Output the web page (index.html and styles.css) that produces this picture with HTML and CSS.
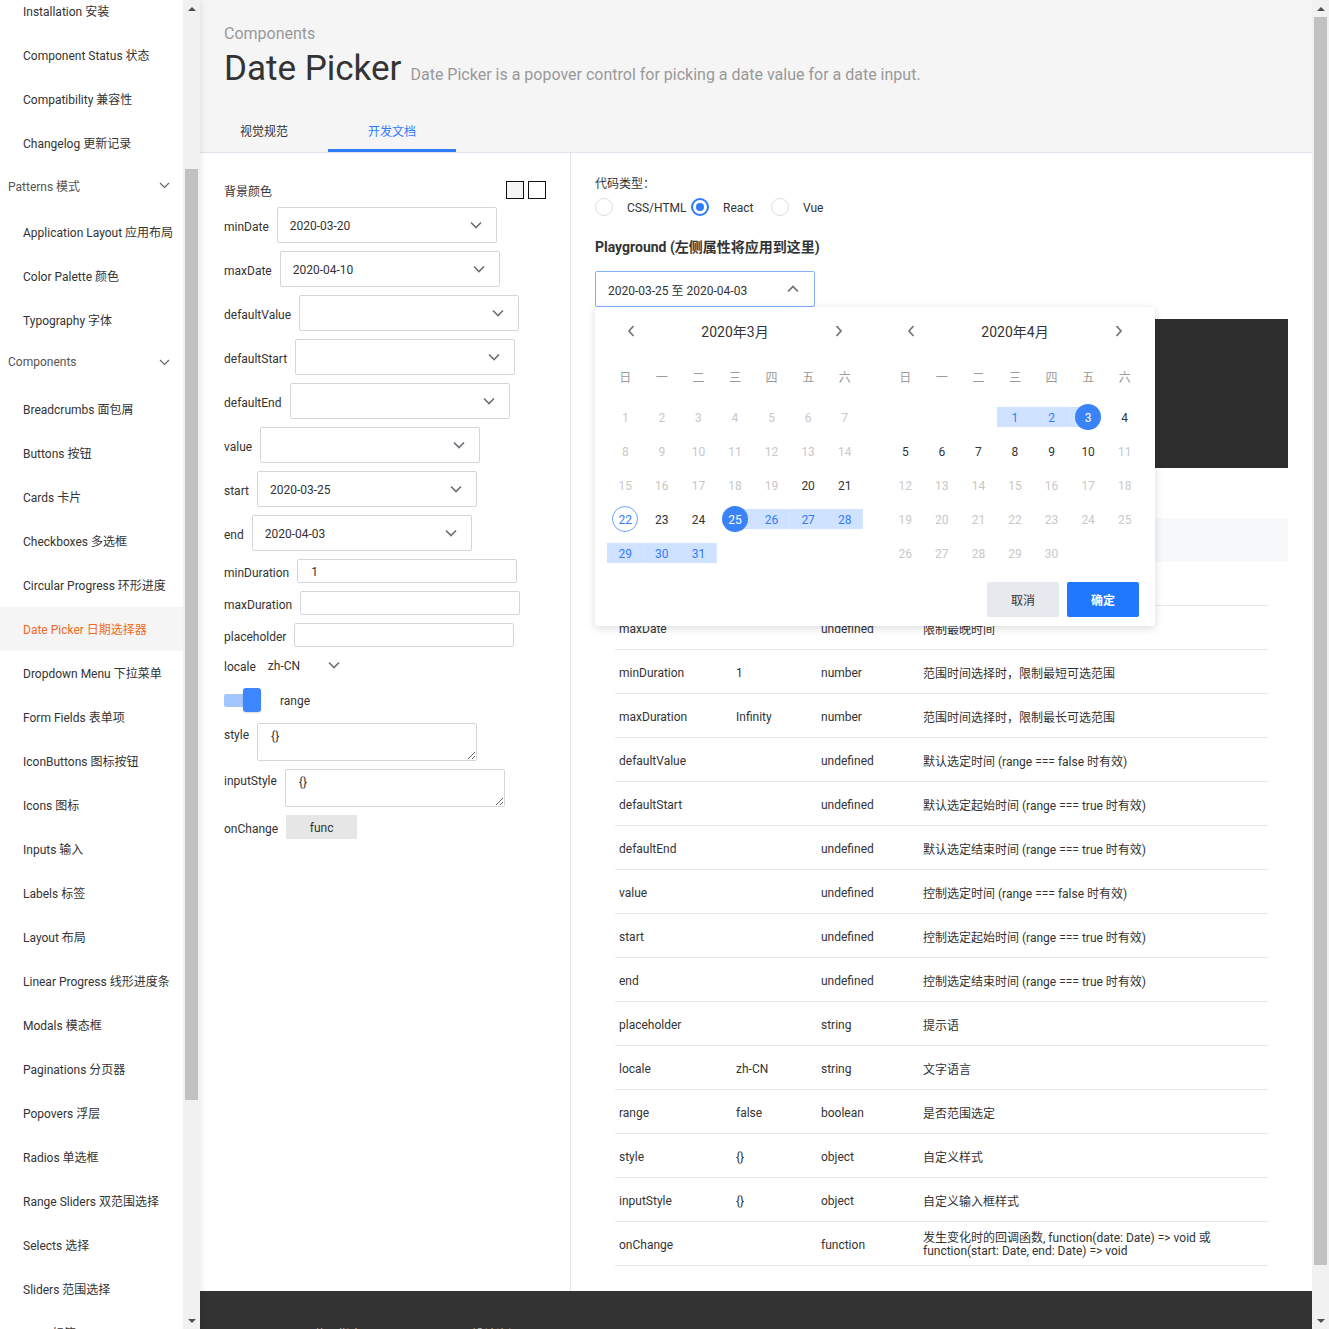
FILE: index.html
```html
<!DOCTYPE html>
<html lang="zh-CN">
<head>
<meta charset="utf-8">
<title>Date Picker</title>
<link rel="stylesheet" href="styles.css">
</head>
<body>
<div class="app">
  <aside class="sidebar">
    <nav class="nav">
      <div class="nav-sub nav-first">
        <div class="nav-item">Installation 安装</div>
        <div class="nav-item">Component Status 状态</div>
        <div class="nav-item">Compatibility 兼容性</div>
        <div class="nav-item">Changelog 更新记录</div>
      </div>
      <div class="nav-group"><span>Patterns 模式</span><svg class="g-chev" width="11" height="7" viewBox="0 0 11 7"><path d="M1 1l4.5 4.5L10 1" fill="none" stroke="#666" stroke-width="1.2"/></svg></div>
      <div class="nav-sub">
        <div class="nav-item">Application Layout 应用布局</div>
        <div class="nav-item">Color Palette 颜色</div>
        <div class="nav-item">Typography 字体</div>
      </div>
      <div class="nav-group"><span>Components</span><svg class="g-chev" width="11" height="7" viewBox="0 0 11 7"><path d="M1 1l4.5 4.5L10 1" fill="none" stroke="#666" stroke-width="1.2"/></svg></div>
      <div class="nav-sub">
        <div class="nav-item">Breadcrumbs 面包屑</div>
        <div class="nav-item">Buttons 按钮</div>
        <div class="nav-item">Cards 卡片</div>
        <div class="nav-item">Checkboxes 多选框</div>
        <div class="nav-item">Circular Progress 环形进度</div>
        <div class="nav-item active">Date Picker 日期选择器</div>
        <div class="nav-item">Dropdown Menu 下拉菜单</div>
        <div class="nav-item">Form Fields 表单项</div>
        <div class="nav-item">IconButtons 图标按钮</div>
        <div class="nav-item">Icons 图标</div>
        <div class="nav-item">Inputs 输入</div>
        <div class="nav-item">Labels 标签</div>
        <div class="nav-item">Layout 布局</div>
        <div class="nav-item">Linear Progress 线形进度条</div>
        <div class="nav-item">Modals 模态框</div>
        <div class="nav-item">Paginations 分页器</div>
        <div class="nav-item">Popovers 浮层</div>
        <div class="nav-item">Radios 单选框</div>
        <div class="nav-item">Range Sliders 双范围选择</div>
        <div class="nav-item">Selects 选择</div>
        <div class="nav-item">Sliders 范围选择</div>
        <div class="nav-item">Tags 标签</div>
      </div>
    </nav>
    <div class="vscroll side-scroll">
      <div class="sb-arrow"><span class="tri-up"></span></div>
      <div class="sb-track"><div class="sb-thumb"></div></div>
      <div class="sb-arrow"><span class="tri-down"></span></div>
    </div>
  </aside>

  <main class="main">
    <header class="page-head">
      <div class="crumb">Components</div>
      <div class="title-row">
        <h1 class="title">Date Picker</h1>
        <span class="subtitle">Date Picker is a popover control for picking a date value for a date input.</span>
      </div>
      <div class="tabs">
        <div class="tab">视觉规范</div>
        <div class="tab tab-active">开发文档</div>
      </div>
    </header>

    <div class="content">
      <section class="props">
        <div class="bg-row">
          <span>背景颜色</span>
          <div class="swatches"><span class="sw sw-grey"></span><span class="sw"></span></div>
        </div>
        <div class="field"><label>minDate</label><div class="select"><span>2020-03-20</span><svg width="12" height="8" viewBox="0 0 12 8"><path d="M1 1.5l5 5 5-5" fill="none" stroke="#6b6f76" stroke-width="1.6"/></svg></div></div>
        <div class="field"><label>maxDate</label><div class="select"><span>2020-04-10</span><svg width="12" height="8" viewBox="0 0 12 8"><path d="M1 1.5l5 5 5-5" fill="none" stroke="#6b6f76" stroke-width="1.6"/></svg></div></div>
        <div class="field"><label>defaultValue</label><div class="select"><span></span><svg width="12" height="8" viewBox="0 0 12 8"><path d="M1 1.5l5 5 5-5" fill="none" stroke="#6b6f76" stroke-width="1.6"/></svg></div></div>
        <div class="field"><label>defaultStart</label><div class="select"><span></span><svg width="12" height="8" viewBox="0 0 12 8"><path d="M1 1.5l5 5 5-5" fill="none" stroke="#6b6f76" stroke-width="1.6"/></svg></div></div>
        <div class="field"><label>defaultEnd</label><div class="select"><span></span><svg width="12" height="8" viewBox="0 0 12 8"><path d="M1 1.5l5 5 5-5" fill="none" stroke="#6b6f76" stroke-width="1.6"/></svg></div></div>
        <div class="field"><label>value</label><div class="select"><span></span><svg width="12" height="8" viewBox="0 0 12 8"><path d="M1 1.5l5 5 5-5" fill="none" stroke="#6b6f76" stroke-width="1.6"/></svg></div></div>
        <div class="field"><label>start</label><div class="select"><span>2020-03-25</span><svg width="12" height="8" viewBox="0 0 12 8"><path d="M1 1.5l5 5 5-5" fill="none" stroke="#6b6f76" stroke-width="1.6"/></svg></div></div>
        <div class="field"><label>end</label><div class="select"><span>2020-04-03</span><svg width="12" height="8" viewBox="0 0 12 8"><path d="M1 1.5l5 5 5-5" fill="none" stroke="#6b6f76" stroke-width="1.6"/></svg></div></div>
        <div class="field field-sm"><label>minDuration</label><div class="input">1</div></div>
        <div class="field field-sm"><label>maxDuration</label><div class="input"></div></div>
        <div class="field field-sm"><label>placeholder</label><div class="input"></div></div>
        <div class="field locale-row"><label>locale</label><div class="plain-select"><span>zh-CN</span><svg width="12" height="8" viewBox="0 0 12 8"><path d="M1 1.5l5 5 5-5" fill="none" stroke="#6b6f76" stroke-width="1.6"/></svg></div></div>
        <div class="toggle-row">
          <div class="toggle"><span class="toggle-track"></span><span class="toggle-knob"></span></div>
          <span class="toggle-label">range</span>
        </div>
        <div class="field field-top"><label>style</label><textarea class="ta" readonly>{}</textarea></div>
        <div class="field field-top"><label>inputStyle</label><textarea class="ta" readonly>{}</textarea></div>
        <div class="field"><label>onChange</label><button class="func-btn">func</button></div>
      </section>

      <section class="demo">
        <div class="code-type">代码类型：</div>
        <div class="radios">
          <div class="radio-item r1"><span class="radio"></span><span class="r-label">CSS/HTML</span></div>
          <div class="radio-item r2"><span class="radio radio-on"><i></i></span><span class="r-label">React</span></div>
          <div class="radio-item r3"><span class="radio"></span><span class="r-label">Vue</span></div>
        </div>
        <h3 class="pg-title">Playground (左侧属性将应用到这里)</h3>

        <div class="date-wrap">
          <div class="date-input">
            <span>2020-03-25 至 2020-04-03</span>
            <svg width="12" height="8" viewBox="0 0 12 8"><path d="M1 6.5l5-5 5 5" fill="none" stroke="#6b6f76" stroke-width="1.6"/></svg>
          </div>

          <div class="popover">
            <div class="months">
              <div class="month">
                <div class="m-head">
                  <svg width="8" height="12" viewBox="0 0 8 12"><path d="M6.5 1L2 6l4.5 5" fill="none" stroke="#777" stroke-width="1.8"/></svg>
                  <span class="m-title">2020年3月</span>
                  <svg width="8" height="12" viewBox="0 0 8 12"><path d="M1.5 1L6 6l-4.5 5" fill="none" stroke="#777" stroke-width="1.8"/></svg>
                </div>
                <div class="weekdays"><span>日</span><span>一</span><span>二</span><span>三</span><span>四</span><span>五</span><span>六</span></div>
                <div class="days">
                  <span class="d dis">1</span><span class="d dis">2</span><span class="d dis">3</span><span class="d dis">4</span><span class="d dis">5</span><span class="d dis">6</span><span class="d dis">7</span>
                  <span class="d dis">8</span><span class="d dis">9</span><span class="d dis">10</span><span class="d dis">11</span><span class="d dis">12</span><span class="d dis">13</span><span class="d dis">14</span>
                  <span class="d dis">15</span><span class="d dis">16</span><span class="d dis">17</span><span class="d dis">18</span><span class="d dis">19</span><span class="d">20</span><span class="d">21</span>
                  <span class="d today"><i>22</i></span><span class="d">23</span><span class="d">24</span><span class="d start"><i>25</i></span><span class="d in">26</span><span class="d in">27</span><span class="d in">28</span>
                  <span class="d in">29</span><span class="d in">30</span><span class="d in">31</span><span class="d"></span><span class="d"></span><span class="d"></span><span class="d"></span>
                </div>
              </div>
              <div class="month">
                <div class="m-head">
                  <svg width="8" height="12" viewBox="0 0 8 12"><path d="M6.5 1L2 6l4.5 5" fill="none" stroke="#777" stroke-width="1.8"/></svg>
                  <span class="m-title">2020年4月</span>
                  <svg width="8" height="12" viewBox="0 0 8 12"><path d="M1.5 1L6 6l-4.5 5" fill="none" stroke="#777" stroke-width="1.8"/></svg>
                </div>
                <div class="weekdays"><span>日</span><span>一</span><span>二</span><span>三</span><span>四</span><span>五</span><span>六</span></div>
                <div class="days">
                  <span class="d"></span><span class="d"></span><span class="d"></span><span class="d in">1</span><span class="d in">2</span><span class="d end"><i>3</i></span><span class="d">4</span>
                  <span class="d">5</span><span class="d">6</span><span class="d">7</span><span class="d">8</span><span class="d">9</span><span class="d">10</span><span class="d dis">11</span>
                  <span class="d dis">12</span><span class="d dis">13</span><span class="d dis">14</span><span class="d dis">15</span><span class="d dis">16</span><span class="d dis">17</span><span class="d dis">18</span>
                  <span class="d dis">19</span><span class="d dis">20</span><span class="d dis">21</span><span class="d dis">22</span><span class="d dis">23</span><span class="d dis">24</span><span class="d dis">25</span>
                  <span class="d dis">26</span><span class="d dis">27</span><span class="d dis">28</span><span class="d dis">29</span><span class="d dis">30</span><span class="d"></span><span class="d"></span>
                </div>
              </div>
            </div>
            <div class="pop-actions">
              <button class="btn btn-cancel">取消</button>
              <button class="btn btn-ok">确定</button>
            </div>
          </div>
        </div>

        <div class="code-block"></div>

        <div class="api">
          <div class="api-head"><div class="row-grid"><span>属性</span><span>默认值</span><span>类型</span><span>说明</span></div></div>
          <div class="rows">
            <div class="row"><span>minDate</span><span></span><span>undefined</span><span>限制最早时间</span></div>
            <div class="row"><span>maxDate</span><span></span><span>undefined</span><span>限制最晚时间</span></div>
            <div class="row"><span>minDuration</span><span>1</span><span>number</span><span>范围时间选择时，限制最短可选范围</span></div>
            <div class="row"><span>maxDuration</span><span>Infinity</span><span>number</span><span>范围时间选择时，限制最长可选范围</span></div>
            <div class="row"><span>defaultValue</span><span></span><span>undefined</span><span>默认选定时间 (range === false 时有效)</span></div>
            <div class="row"><span>defaultStart</span><span></span><span>undefined</span><span>默认选定起始时间 (range === true 时有效)</span></div>
            <div class="row"><span>defaultEnd</span><span></span><span>undefined</span><span>默认选定结束时间 (range === true 时有效)</span></div>
            <div class="row"><span>value</span><span></span><span>undefined</span><span>控制选定时间 (range === false 时有效)</span></div>
            <div class="row"><span>start</span><span></span><span>undefined</span><span>控制选定起始时间 (range === true 时有效)</span></div>
            <div class="row"><span>end</span><span></span><span>undefined</span><span>控制选定结束时间 (range === true 时有效)</span></div>
            <div class="row"><span>placeholder</span><span></span><span>string</span><span>提示语</span></div>
            <div class="row"><span>locale</span><span>zh-CN</span><span>string</span><span>文字语言</span></div>
            <div class="row"><span>range</span><span>false</span><span>boolean</span><span>是否范围选定</span></div>
            <div class="row"><span>style</span><span>{}</span><span>object</span><span>自定义样式</span></div>
            <div class="row"><span>inputStyle</span><span>{}</span><span>object</span><span>自定义输入框样式</span></div>
            <div class="row"><span>onChange</span><span></span><span>function</span><span class="two-line">发生变化时的回调函数, function(date: Date) =&gt; void 或<br>function(start: Date, end: Date) =&gt; void</span></div>
          </div>
        </div>
      </section>
    </div>

    <footer class="footer">
      <span>使用指南</span>
      <span>设计资源</span>
    </footer>
  </main>

  <div class="vscroll page-scroll">
    <div class="sb-arrow"><span class="tri-up"></span></div>
    <div class="sb-track"><div class="sb-thumb"></div></div>
    <div class="sb-arrow"><span class="tri-down"></span></div>
  </div>
</div>
</body>
</html>
```

FILE: styles.css
```css
* { box-sizing: border-box; }

html, body {
  margin: 0;
  height: 1329px;
  overflow: hidden;
}

body {
  font-family: Roboto, "Noto Sans CJK SC", sans-serif;
  font-size: 12px;
  color: #333;
  background: #fff;
}

.app {
  display: flex;
  height: 1329px;
}

/* ---------- sidebar ---------- */
.sidebar {
  width: 200px;
  flex: none;
  display: flex;
  background: #fff;
  position: relative;
  z-index: 3;
  box-shadow: 2px 0 6px rgba(0, 0, 0, 0.07);
}

.nav {
  width: 183px;
  overflow: hidden;
}

.nav-sub { padding-top: 5px; }
.nav-first { padding-top: 0; margin-top: -11px; }

.nav-item {
  height: 44px;
  line-height: 44px;
  padding-top: 1px;
  padding-left: 23px;
  color: #333;
  white-space: nowrap;
  overflow: hidden;
}

.nav-item.active {
  color: #f06a1d;
  background: #f5f5f5;
}

.nav-group {
  height: 40px;
  padding: 0 13px 0 8px;
  display: flex;
  align-items: center;
  justify-content: space-between;
  color: #555;
}

/* fake classic scrollbars */
.vscroll {
  width: 17px;
  flex: none;
  background: #f1f1f1;
  display: flex;
  flex-direction: column;
}

.sb-arrow {
  height: 17px;
  display: flex;
  align-items: center;
  justify-content: center;
}

.tri-up {
  width: 0; height: 0;
  border-left: 4px solid transparent;
  border-right: 4px solid transparent;
  border-bottom: 4px solid #505050;
}

.tri-down {
  width: 0; height: 0;
  border-left: 4px solid transparent;
  border-right: 4px solid transparent;
  border-top: 4px solid #505050;
}

.sb-track {
  flex: 1;
  padding: 0 2px;
}

.sb-thumb { background: #c1c1c1; }

.side-scroll .sb-thumb { margin-top: 152px; height: 931px; }
.page-scroll .sb-thumb { margin-top: 0; height: 1248px; }

/* ---------- main ---------- */
.main {
  flex: 1;
  min-width: 0;
  display: flex;
  flex-direction: column;
}

.page-head {
  background: #f5f5f5;
  padding: 23px 0 0 24px;
  border-bottom: 1px solid #dfe5ee;
}

.crumb {
  font-size: 16px;
  line-height: 22px;
  color: #999;
}

.title-row {
  display: flex;
  align-items: baseline;
  height: 48px;
}

.title {
  margin: 0;
  font-size: 35px;
  line-height: 48px;
  font-weight: 400;
  color: #333;
}

.subtitle {
  margin-left: 9px;
  font-size: 16px;
  color: #999;
}

.tabs {
  display: flex;
  margin-left: -24px;
  margin-top: 19px;
}

.tab {
  width: 128px;
  height: 40px;
  line-height: 41px;
  text-align: center;
  color: #333;
  border-bottom: 3px solid transparent;
}

.tab-active {
  color: #2f7bff;
  border-bottom-color: #2f7bff;
}

.content {
  display: flex;
  flex: none;
}

/* ---------- props panel ---------- */
.props {
  width: 371px;
  flex: none;
  border-right: 1px solid #e4e7eb;
  padding: 28px 24px 0 24px;
}

.bg-row {
  height: 18px;
  display: flex;
  align-items: center;
  justify-content: space-between;
}

.swatches { display: flex; gap: 4px; }

.sw {
  width: 18px;
  height: 18px;
  border: 1.5px solid #111;
  background: #fff;
}
.sw-grey { background: #f5f5f5; }

.field {
  display: flex;
  align-items: center;
  gap: 8px;
  margin-top: 8px;
}

.field label {
  color: #333;
  white-space: nowrap;
  padding-top: 3px;
}

.select {
  width: 220px;
  height: 36px;
  border: 1px solid #d2d6dc;
  border-radius: 2px;
  padding: 0 14px 0 12px;
  display: flex;
  align-items: center;
  justify-content: space-between;
  background: #fff;
}

.select span { padding-top: 2px; }

.input {
  width: 220px;
  height: 24px;
  line-height: 24px;
  border: 1px solid #d2d6dc;
  border-radius: 2px;
  padding-left: 13px;
}

.locale-row { margin-top: 8px; height: 20px; }

.plain-select {
  display: flex;
  align-items: center;
  gap: 28px;
  margin-left: 4px;
  padding-top: 2px;
}

.plain-select svg { margin-top: -2px; }

.toggle-row {
  display: flex;
  align-items: center;
  gap: 19px;
  margin-top: 13px;
  height: 24px;
}

.toggle-label { padding-top: 2px; }

.toggle {
  width: 37px;
  height: 24px;
  display: flex;
  align-items: center;
}

.toggle-track {
  width: 30px;
  height: 13px;
  background: #a3c6ff;
  border-radius: 2px;
}

.toggle-knob {
  width: 18px;
  height: 24px;
  background: #3d86ff;
  border-radius: 3px;
  margin-left: -11px;
  box-shadow: 0 1px 2px rgba(0, 0, 0, 0.15);
}

.field-top { align-items: flex-start; }
.field-top label { padding-top: 5px; line-height: 14px; }
.toggle-row + .field-top { margin-top: 11px; }

.ta {
  width: 220px;
  height: 38px;
  border: 1px solid #d2d6dc;
  border-radius: 2px;
  padding: 5px 13px 4px;
  font-family: Roboto, "Noto Sans CJK SC", sans-serif;
  font-size: 12px;
  color: #333;
  resize: vertical;
  outline: none;
}

.func-btn {
  width: 71px;
  height: 24px;
  border: none;
  background: #e6e6e6;
  font-family: Roboto, "Noto Sans CJK SC", sans-serif;
  font-size: 12px;
  color: #333;
  padding: 2px 0 0;
}

/* ---------- demo panel ---------- */
.demo {
  flex: 1;
  min-width: 0;
  padding: 20px 24px 25px 24px;
}

.code-type { line-height: 20px; padding-top: 1px; height: 20px; }

.radios {
  display: flex;
  align-items: center;
  margin-top: 4px;
  height: 20px;
}

.radio-item { display: flex; align-items: center; }
.r1 { width: 96px; }
.r2 { width: 80px; }
.r-label { padding-top: 2px; }

.radio {
  width: 18px;
  height: 18px;
  border-radius: 50%;
  border: 1.5px solid #dadde2;
  display: flex;
  align-items: center;
  justify-content: center;
  margin-right: 14px;
}

.radio-on { border: 2px solid #2f7bff; }
.radio-on i {
  width: 8px;
  height: 8px;
  border-radius: 50%;
  background: #2f7bff;
}

.pg-title {
  margin: 20px 0 0 0;
  font-size: 14px;
  line-height: 20px;
  font-weight: 700;
  color: #333;
}

.date-wrap {
  position: relative;
  margin-top: 14px;
  width: 220px;
  z-index: 2;
}

.date-input {
  width: 220px;
  height: 36px;
  border: 1px solid #7fb1ff;
  border-radius: 2px;
  padding: 0 15px 0 12px;
  display: flex;
  align-items: center;
  justify-content: space-between;
  background: #fff;
}

.popover {
  position: absolute;
  top: 36px;
  left: 0;
  width: 560px;
  height: 319px;
  background: #fff;
  border-radius: 2px;
  box-shadow: 0 2px 8px rgba(0, 0, 0, 0.15);
}

.months { display: flex; }

.month {
  width: 280px;
  padding: 0 12px;
}

.m-head {
  height: 48px;
  display: flex;
  align-items: center;
  justify-content: space-between;
  padding: 0 20px;
}

.m-title {
  font-size: 14px;
  color: #333;
}

.weekdays {
  display: grid;
  grid-template-columns: repeat(7, 1fr);
  height: 34px;
  margin-top: 4px;
  align-items: center;
  text-align: center;
  color: #9a9a9a;
}

.days {
  display: grid;
  grid-template-columns: repeat(7, 1fr);
  grid-auto-rows: 34px;
  margin-top: 7px;
}

.d {
  display: flex;
  align-items: center;
  justify-content: center;
  color: #333;
  padding-top: 2px;
}

.d i {
  font-style: normal;
  width: 26px;
  height: 26px;
  margin-top: -2px;
  padding-top: 2px;
  border-radius: 50%;
  display: flex;
  align-items: center;
  justify-content: center;
}

.dis { color: #c8c8c8; }

.in {
  color: #2f7bff;
  background: linear-gradient(#cfe2ff, #cfe2ff) center / 100% 20px no-repeat;
}

.start {
  background: linear-gradient(#cfe2ff, #cfe2ff) right center / 50% 20px no-repeat;
}

.end {
  background: linear-gradient(#cfe2ff, #cfe2ff) left center / 50% 20px no-repeat;
}

.start i, .end i {
  background: #3a82f7;
  color: #fff;
}

.today i {
  border: 1px solid #6ea5ff;
  color: #2f7bff;
}

.pop-actions {
  display: flex;
  justify-content: flex-end;
  gap: 8px;
  padding-right: 16px;
  margin-top: 12px;
}

.btn {
  width: 72px;
  height: 35px;
  border: none;
  border-radius: 2px;
  font-family: Roboto, "Noto Sans CJK SC", sans-serif;
  font-size: 12px;
  padding: 0;
}

.btn-cancel { background: #e6e9ee; color: #333; }
.btn-ok { background: #1f78ff; color: #fff; font-weight: 700; }

.code-block {
  margin-top: 12px;
  height: 149px;
  background: #2e2e2e;
}

.api { margin-top: 50px; }

.api-head {
  height: 44px;
  background: #f7f8fa;
  padding: 0 20px;
}

.row-grid, .row {
  display: grid;
  grid-template-columns: 117px 85px 102px 1fr;
  align-items: center;
  height: 44px;
}

.rows { margin: 0 20px; }

.row {
  border-bottom: 1px solid #e4e8ee;
  color: #333;
  padding-top: 2px;
}

.row span, .row-grid span { padding: 0 4px; }

.two-line { line-height: 13px; }

/* ---------- footer ---------- */
.footer {
  background: #333;
  height: 120px;
  flex: none;
  display: flex;
  gap: 110px;
  padding: 34px 0 0 114px;
  color: #bbb;
  font-size: 12px;
}
```
